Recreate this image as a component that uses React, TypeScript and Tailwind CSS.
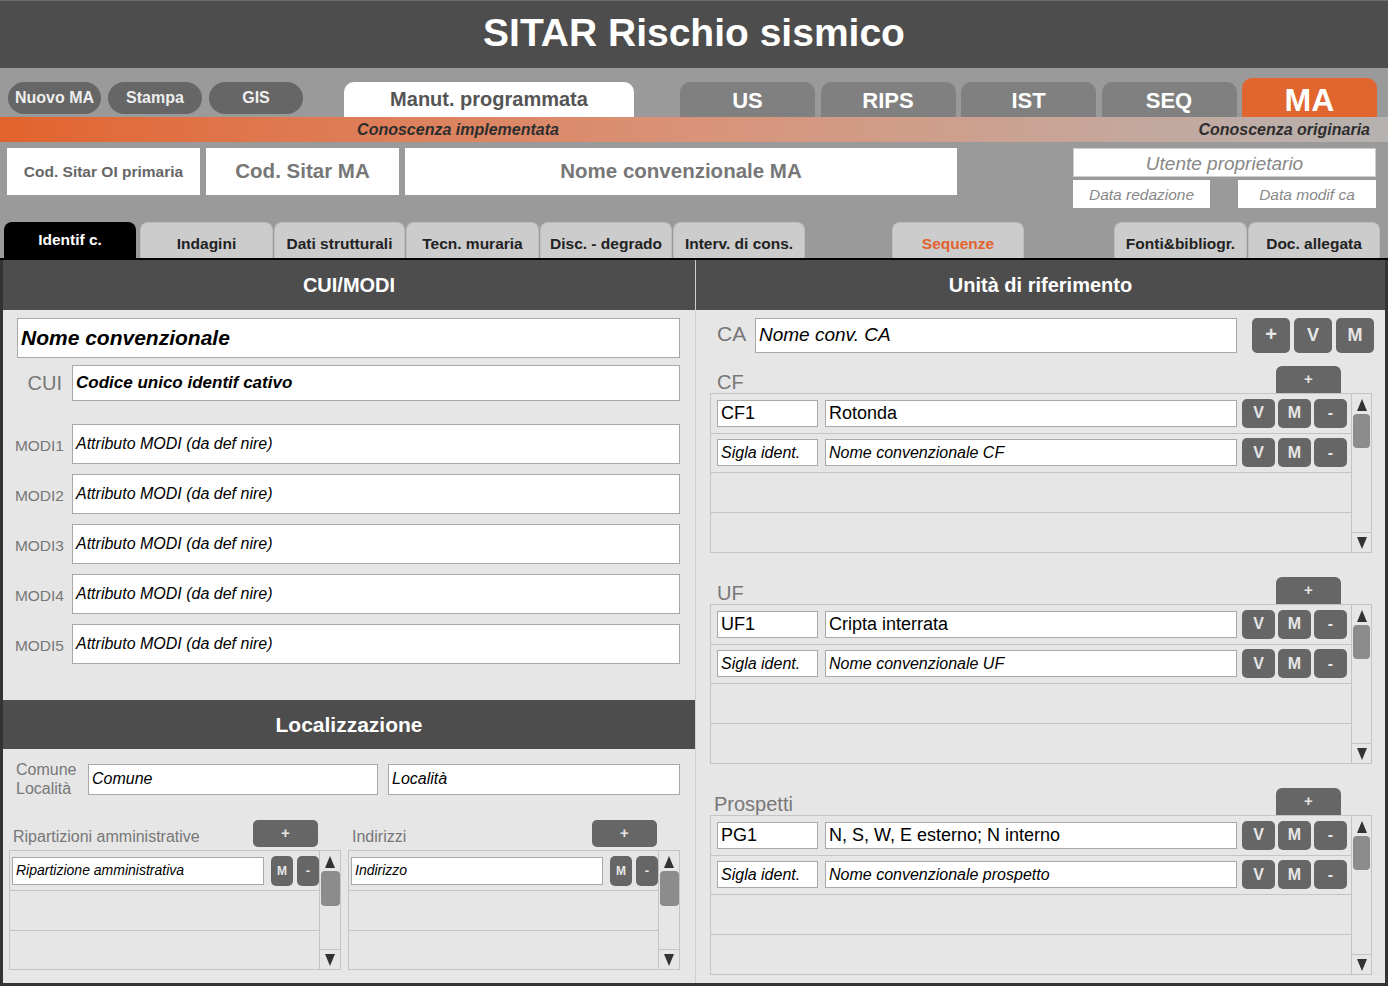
import type { ReactNode } from 'react';

// --- small building blocks ---

function Pill({ label, className }: { label: string; className: string }) {
  return (
    <div
      className={`h-[32px] rounded-full bg-[#666666] text-[#eeeeee] font-bold text-[16px] flex items-center justify-center ${className}`}
    >
      {label}
    </div>
  );
}

function ModTab({ label }: { label: string }) {
  return (
    <div className="w-[135px] h-[35px] rounded-t-[10px] bg-[#808080] text-white font-bold text-[22px] flex items-center justify-center pt-[1px]">
      {label}
    </div>
  );
}

function SubTab({ label, className = '', active = false, orange = false }: { label: string; className?: string; active?: boolean; orange?: boolean }) {
  return (
    <div
      className={`h-[36px] rounded-t-[8px] flex items-end justify-center text-[15.5px] font-bold ${
        active ? 'bg-black text-white pb-[7px]' : 'bg-[#cccccc] border-t border-x border-[#bdbdbd] pb-[3px]'
      } ${orange ? 'text-[#e2632c]' : active ? '' : 'text-[#222222]'} ${className}`}
    >
      {label}
    </div>
  );
}

function Field({ children, className = '' }: { children?: ReactNode; className?: string }) {
  return (
    <div className={`bg-white border border-[#a8a8a8] flex items-center pl-[3px] text-black overflow-hidden whitespace-nowrap ${className}`}>
      {children}
    </div>
  );
}

function Btn({ label, className = '' }: { label: string; className?: string }) {
  return (
    <div className={`bg-[#666666] rounded-[5px] text-[#e6e6e6] font-bold flex items-center justify-center ${className}`}>
      {label}
    </div>
  );
}

function SectionHead({ title, className = '' }: { title: string; className?: string }) {
  return (
    <div className={`bg-[#4d4d4d] text-white font-bold flex items-center justify-center ${className}`}>{title}</div>
  );
}

function Arrow({ up }: { up?: boolean }) {
  return (
    <svg width="12" height="14" viewBox="0 0 12 14">
      {up ? <polygon points="6,1 11,13 1,13" fill="#333" /> : <polygon points="1,1 11,1 6,13" fill="#333" />}
    </svg>
  );
}

function ScrollCol({ w, thumb }: { w: string; thumb: string }) {
  return (
    <div className={`${w} border-l border-[#c4c4c4] flex flex-col items-center`}>
      <div className="h-[20px] flex items-center justify-center pt-[2px]">
        <Arrow up />
      </div>
      <div className={`${thumb} rounded-[4px] bg-[#8c8c8c]`} />
      <div className="flex-1" />
      <div className="h-[20px] w-full border-t border-[#c4c4c4] flex items-center justify-center">
        <Arrow />
      </div>
    </div>
  );
}

// --- right-side unit lists ---

type UnitRow = { code: string; name: string; italic?: boolean };

function UnitList({ label, rows, labelPad = 'pl-[7px]' }: { label: string; rows: UnitRow[]; labelPad?: string }) {
  return (
    <div className="ml-[14px] w-[662px]">
      <div className="h-[27px] flex items-end justify-between">
        <div className={`text-[20px] leading-none text-[#777777] pb-[1px] ${labelPad}`}>{label}</div>
        <Btn label="+" className="w-[65px] h-[27px] mr-[31px] text-[15px] rounded-b-none rounded-t-[6px]" />
      </div>
      <div className="h-[160px] border border-[#c4c4c4] flex">
        <div className="flex-1 flex flex-col">
          {[0, 1, 2, 3].map((i) => {
            const r = rows[i];
            return (
              <div key={i} className={`h-[40px] flex items-center ${i < 3 ? 'border-b border-[#c4c4c4]' : ''}`}>
                {r && (
                  <>
                    <Field className={`ml-[6px] w-[101px] h-[27px] ${r.italic ? 'italic text-[16px]' : 'text-[18px]'}`}>{r.code}</Field>
                    <Field className={`ml-[7px] w-[412px] h-[27px] ${r.italic ? 'italic text-[16px]' : 'text-[18px]'}`}>{r.name}</Field>
                    <div className="ml-[5px] flex gap-[3px]">
                      <Btn label="V" className="w-[33px] h-[29px] text-[16px]" />
                      <Btn label="M" className="w-[33px] h-[29px] text-[16px]" />
                      <Btn label="-" className="w-[33px] h-[29px] text-[16px]" />
                    </div>
                  </>
                )}
              </div>
            );
          })}
        </div>
        <ScrollCol w="w-[20px]" thumb="w-[17px] h-[34px]" />
      </div>
    </div>
  );
}

// --- left-side small lists ---

function SmallList({ label, item, className = '' }: { label: string; item: string; className?: string }) {
  return (
    <div className={`w-[332px] ${className}`}>
      <div className="h-[27px] flex items-center justify-between">
        <div className="text-[16px] leading-none text-[#777777] pl-[4px] pt-[7px]">{label}</div>
        <Btn label="+" className="w-[65px] h-[27px] mr-[23px] text-[15px]" />
      </div>
      <div className="mt-[3px] h-[120px] border border-[#c4c4c4] flex">
        <div className="flex-1 flex flex-col">
          <div className="h-[40px] flex items-center border-b border-[#c4c4c4]">
            <Field className="ml-[2px] w-[252px] h-[28px] italic text-[14px]">{item}</Field>
            <Btn label="M" className="ml-[7px] w-[22px] h-[30px] text-[12px] rounded-[4px]" />
            <Btn label="-" className="ml-[4px] w-[22px] h-[30px] text-[13px] rounded-[4px]" />
          </div>
          <div className="h-[40px] border-b border-[#c4c4c4]" />
          <div className="flex-1" />
        </div>
        <ScrollCol w="w-[21px]" thumb="w-[19px] h-[35px]" />
      </div>
    </div>
  );
}

const modi = ['MODI1', 'MODI2', 'MODI3', 'MODI4', 'MODI5'];

export default function App() {
  return (
    <div className="w-[1388px] h-[986px] bg-[#9a9a9a] font-['Liberation_Sans',Arial,sans-serif] overflow-hidden">
      {/* title */}
      <div className="h-[68px] bg-[#4d4d4d] border-t border-[#6a6a6a] flex items-center justify-center pb-[3px] text-white font-bold text-[39px]">
        SITAR Rischio sismico
      </div>

      {/* top tabs */}
      <div className="h-[49px] flex items-end">
        <div className="self-start mt-[14px] ml-[8px] flex gap-[7px]">
          <Pill label="Nuovo MA" className="w-[93px]" />
          <Pill label="Stampa" className="w-[94px]" />
          <Pill label="GIS" className="w-[94px]" />
        </div>
        <div className="ml-[41px] w-[290px] h-[35px] bg-white rounded-t-[10px] flex items-center justify-center pb-[2px] text-[20px] font-bold text-[#555555]">
          Manut. programmata
        </div>
        <div className="ml-[46px] flex items-end gap-[5.5px]">
          <ModTab label="US" />
          <ModTab label="RIPS" />
          <ModTab label="IST" />
          <ModTab label="SEQ" />
          <div className="w-[135px] h-[39px] rounded-t-[10px] bg-[#e0652f] text-white font-bold text-[32px] flex items-center justify-center pt-[4px]">
            MA
          </div>
        </div>
      </div>

      {/* knowledge band */}
      <div className="h-[25px] bg-linear-to-r from-[#e2632c] via-[#d99378] to-[#b6b2b0] flex items-center italic font-bold text-[16px] text-[#2e2e2e]">
        <div className="w-[916px] text-center">Conoscenza implementata</div>
        <div className="ml-auto pr-[18px]">Conoscenza originaria</div>
      </div>

      {/* identification row */}
      <div className="h-[80px] flex">
        <div className="mt-[6px] ml-[7px] w-[193px] h-[47px] bg-white flex items-center justify-center text-[15.5px] font-bold text-[#666666]">
          Cod. Sitar OI primaria
        </div>
        <div className="mt-[6px] ml-[6px] w-[193px] h-[47px] bg-white flex items-center justify-center text-[20.5px] font-bold text-[#777777]">
          Cod. Sitar MA
        </div>
        <div className="mt-[6px] ml-[6px] w-[552px] h-[47px] bg-white flex items-center justify-center text-[20.5px] font-bold text-[#777777]">
          Nome convenzionale MA
        </div>
        <div className="ml-auto mr-[12px] mt-[6px] w-[303px] italic text-[#888888]">
          <div className="h-[29px] bg-white border border-[#cfcfcf] flex items-center justify-center pt-[3px] text-[19px]">Utente proprietario</div>
          <div className="mt-[3px] flex justify-between">
            <div className="w-[137px] h-[28px] bg-white flex items-center justify-center pt-[1px] text-[15.5px]">Data redazione</div>
            <div className="w-[138px] h-[28px] bg-white flex items-center justify-center pt-[1px] text-[15.5px]">Data modif ca</div>
          </div>
        </div>
      </div>

      {/* section tabs */}
      <div className="h-[36px] flex items-end">
        <SubTab label="Identif c." active className="ml-[4px] w-[132px]" />
        <SubTab label="Indagini" className="ml-[4px] w-[133px]" />
        <SubTab label="Dati strutturali" className="ml-[1px] w-[131px]" />
        <SubTab label="Tecn. muraria" className="ml-[1px] w-[133px]" />
        <SubTab label="Disc. - degrado" className="ml-[1px] w-[132px]" />
        <SubTab label="Interv. di cons." className="ml-[1px] w-[132px]" />
        <SubTab label="Sequenze" orange className="ml-[87px] w-[132px]" />
        <SubTab label="Fonti&bibliogr." className="ml-[90px] w-[133px]" />
        <SubTab label="Doc. allegata" className="ml-[1px] w-[132px]" />
      </div>
      <div className="h-[2px] bg-black" />

      {/* body */}
      <div className="h-[726px] flex bg-[#e6e6e6] border-x-[3px] border-b-[3px] border-[#333333]">
        {/* left column */}
        <div className="w-[692px] flex flex-col">
          <SectionHead title="CUI/MODI" className="h-[50px] text-[20px]" />
          <Field className="mt-[8px] ml-[14px] w-[663px] h-[40px] italic font-bold text-[21px]">Nome convenzionale</Field>
          <div className="mt-[7px] flex items-center">
            <div className="w-[69px] pr-[10px] text-right text-[20px] text-[#777777]">CUI</div>
            <Field className="w-[608px] h-[36px] italic font-bold text-[17px]">Codice unico identif cativo</Field>
          </div>
          <div className="mt-[23px] flex flex-col gap-[10px]">
            {modi.map((m) => (
              <div key={m} className="flex items-center">
                <div className="w-[69px] pr-[8px] pt-[3px] text-right text-[15.5px] text-[#777777]">{m}</div>
                <Field className="w-[608px] h-[40px] italic text-[16px]">Attributo MODI (da def nire)</Field>
              </div>
            ))}
          </div>
          <SectionHead title="Localizzazione" className="mt-[36px] h-[49px] text-[21px]" />
          <div className="mt-[11px] h-[38px] flex items-center">
            <div className="w-[85px] pl-[13px] text-[16px] leading-[19px] text-[#777777]">
              Comune
              <br />
              Località
            </div>
            <Field className="w-[290px] h-[31px] italic text-[16px]">Comune</Field>
            <Field className="ml-[10px] w-[292px] h-[31px] italic text-[16px]">Località</Field>
          </div>
          <div className="mt-[22px] flex">
            <SmallList label="Ripartizioni amministrative" item="Ripartizione amministrativa" className="ml-[6px]" />
            <SmallList label="Indirizzi" item="Indirizzo" className="ml-[7px]" />
          </div>
        </div>

        <div className="w-px bg-[#cfcfcf]" />

        {/* right column */}
        <div className="flex-1 flex flex-col">
          <SectionHead title="Unità di riferimento" className="h-[50px] text-[20px]" />
          <div className="mt-[8px] flex items-start">
            <div className="w-[59px] pl-[21px] text-[21px] leading-none pt-[5px] text-[#777777]">CA</div>
            <Field className="w-[482px] h-[35px] italic text-[19px]">Nome conv. CA</Field>
            <div className="ml-[15px] flex gap-[4px]">
              <Btn label="+" className="w-[38px] h-[35px] text-[20px] pb-[3px]" />
              <Btn label="V" className="w-[38px] h-[35px] text-[18px]" />
              <Btn label="M" className="w-[38px] h-[35px] text-[18px]" />
            </div>
          </div>
          <div className="mt-[13px]">
            <UnitList
              label="CF"
              rows={[
                { code: 'CF1', name: 'Rotonda' },
                { code: 'Sigla ident.', name: 'Nome convenzionale CF', italic: true },
              ]}
            />
          </div>
          <div className="mt-[24px]">
            <UnitList
              label="UF"
              rows={[
                { code: 'UF1', name: 'Cripta interrata' },
                { code: 'Sigla ident.', name: 'Nome convenzionale UF', italic: true },
              ]}
            />
          </div>
          <div className="mt-[24px]">
            <UnitList
              label="Prospetti"
              labelPad="pl-[4px]"
              rows={[
                { code: 'PG1', name: 'N, S, W, E esterno; N interno' },
                { code: 'Sigla ident.', name: 'Nome convenzionale prospetto', italic: true },
              ]}
            />
          </div>
        </div>
      </div>
    </div>
  );
}
